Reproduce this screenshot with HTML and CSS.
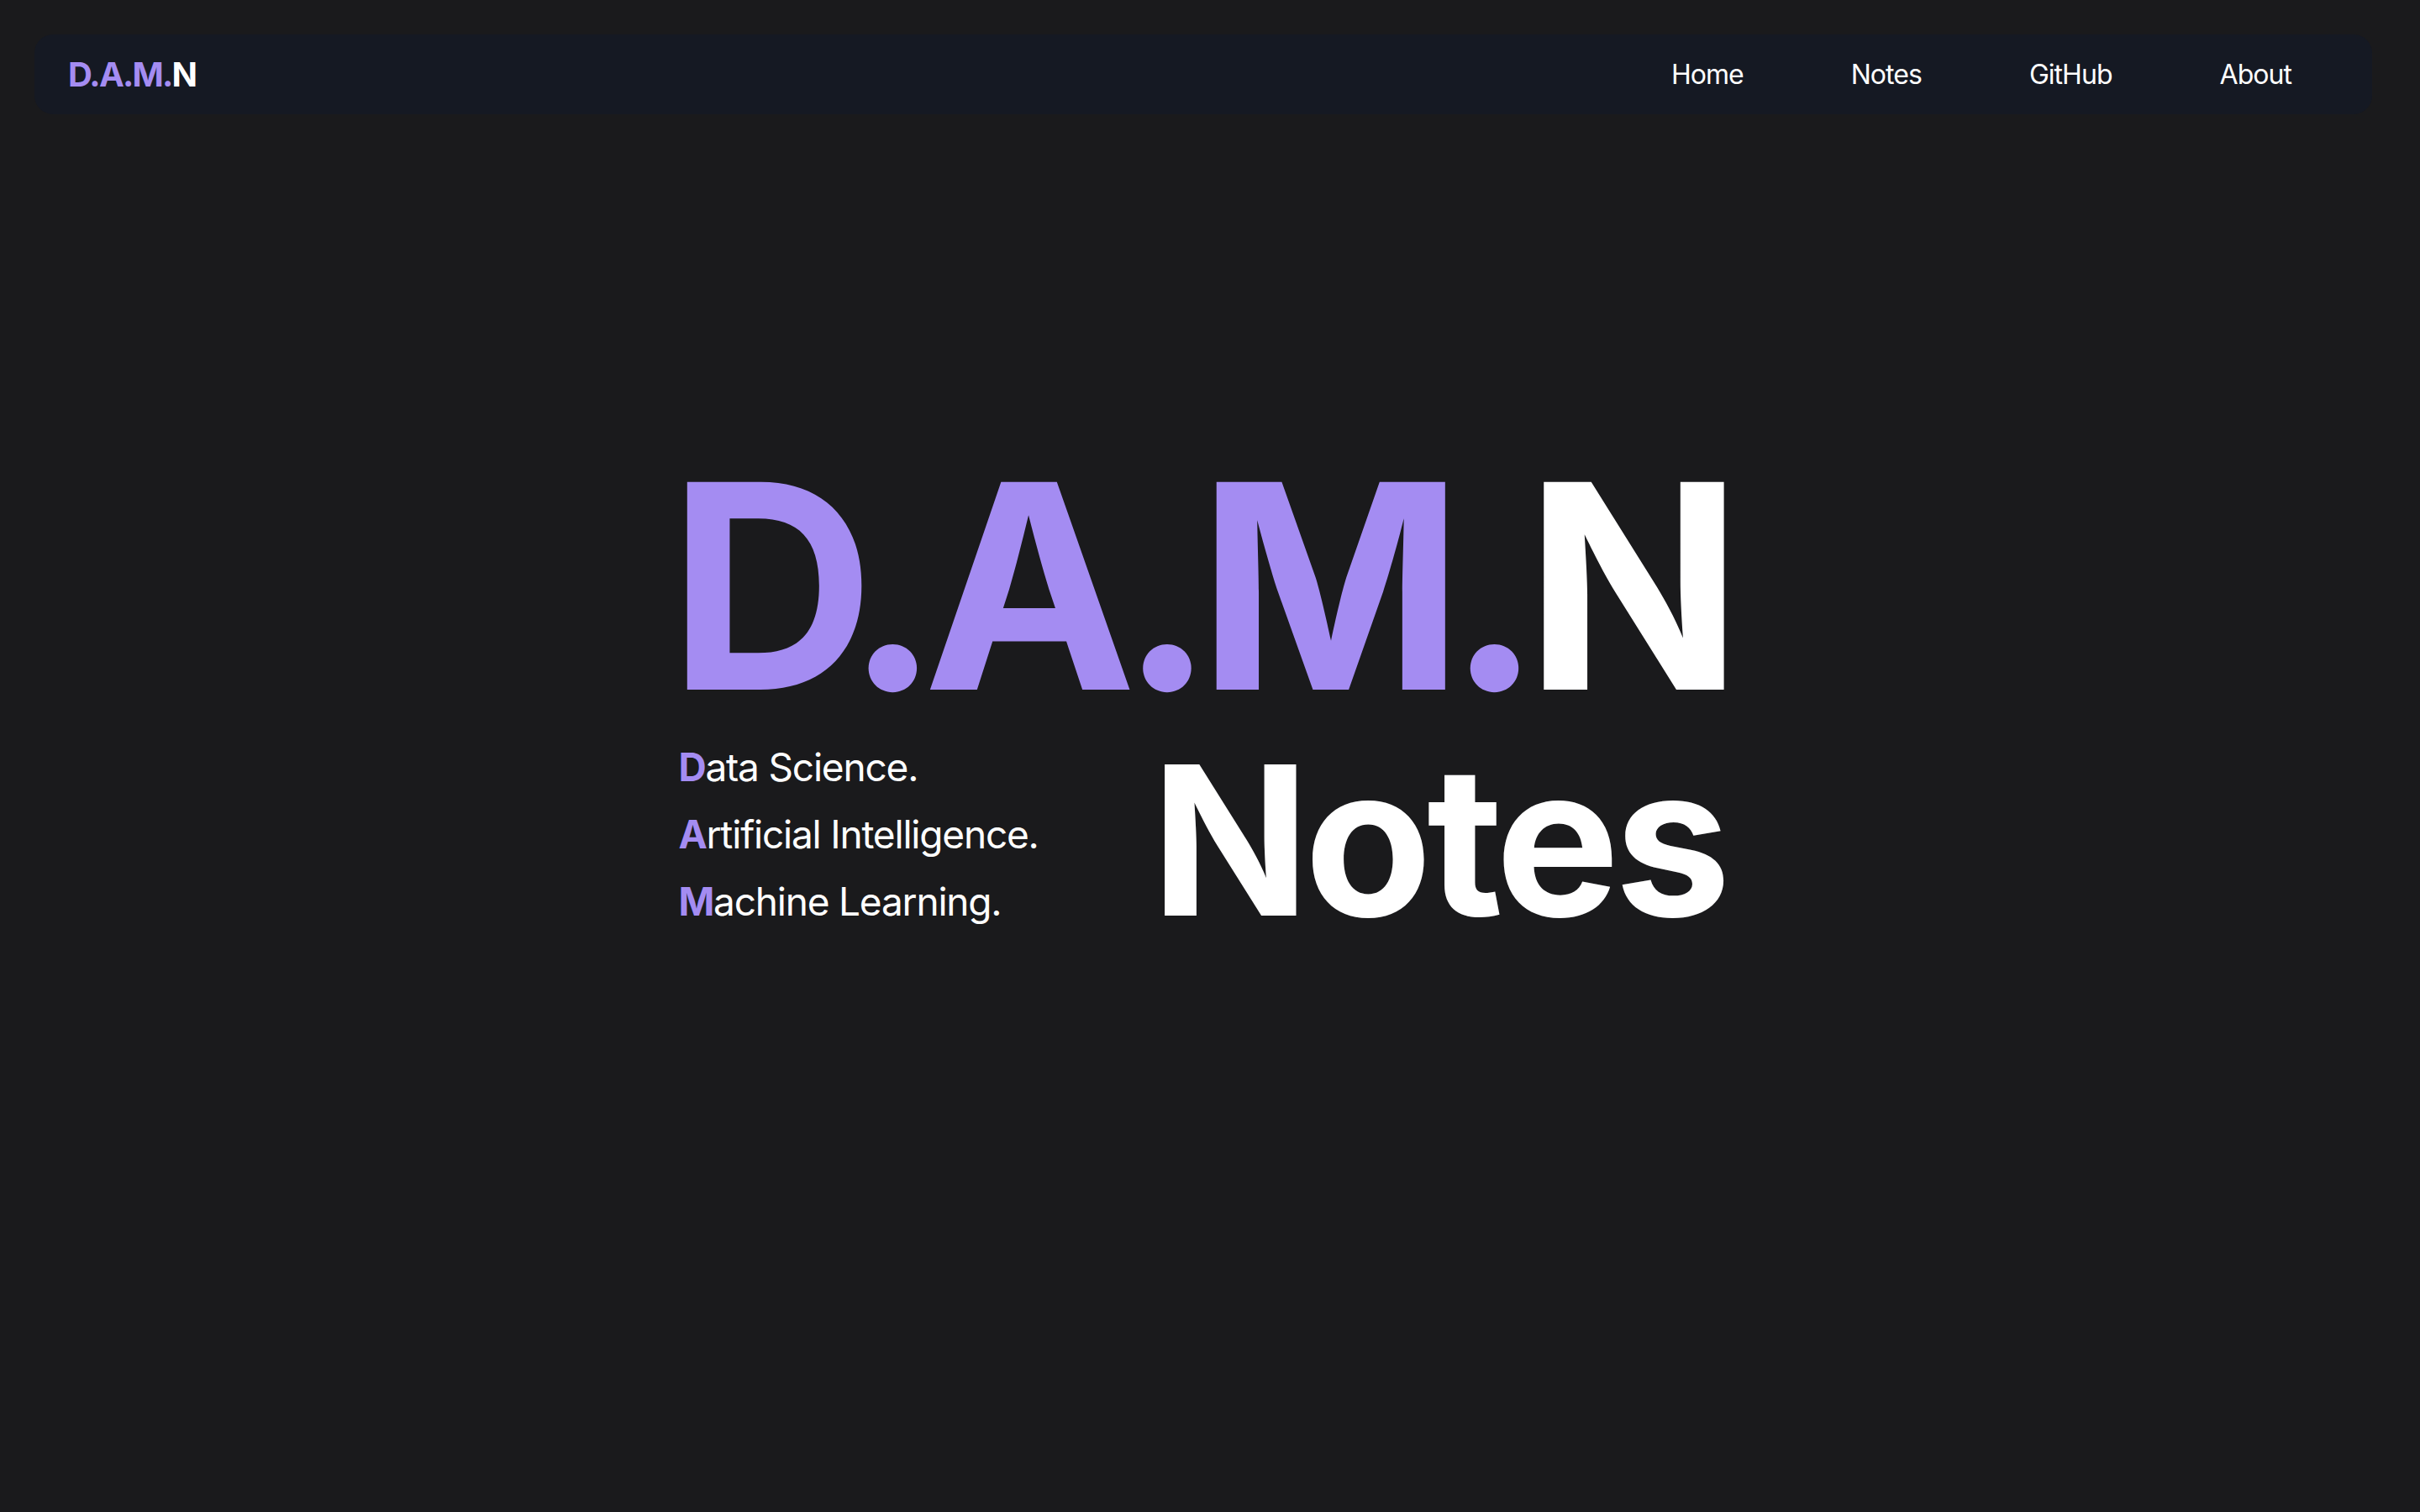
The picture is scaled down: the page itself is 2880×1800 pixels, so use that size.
FILE: index.html
```html
<!DOCTYPE html>
<html lang="en">
<head>
<meta charset="utf-8">
<title>D.A.M.N Notes</title>
<link rel="stylesheet" href="styles.css">
</head>
<body>
<header class="header">
  <nav class="navbar">
    <a class="brand" href="#"><span class="accent">D.A.M.</span>N</a>
    <ul class="nav-links">
      <li><a href="#">Home</a></li>
      <li><a href="#">Notes</a></li>
      <li><a href="#">GitHub</a></li>
      <li><a href="#">About</a></li>
    </ul>
  </nav>
</header>
<main class="hero">
  <div class="hero-inner">
    <h1 class="title"><span class="accent">D.A.M.</span>N</h1>
    <div class="hero-row">
      <ul class="subjects">
        <li><span class="letter">D</span>ata Science.</li>
        <li><span class="letter">A</span>rtificial Intelligence.</li>
        <li><span class="letter">M</span>achine Learning.</li>
      </ul>
      <div class="notes">Notes</div>
    </div>
  </div>
</main>
</body>
</html>
```
FILE: styles.css
```css
html, body {
  margin: 0;
  padding: 0;
  background: #1a1a1c;
  height: 100%;
}
body {
  font-family: Inter, "Liberation Sans", sans-serif;
  color: #ffffff;
}
.header {
  padding: 41px 57px 0 41px;
}
.accent { color: #a48cf2; }
.navbar {
  height: 95px;
  background: #151923;
  border-radius: 22px;
  display: flex;
  align-items: center;
  justify-content: space-between;
  padding: 0 32px 0 40px;
}
.brand {
  font-size: 40px;
  font-weight: 700;
  color: #ffffff;
  text-decoration: none;
  letter-spacing: -0.045em;
}
.nav-links {
  list-style: none;
  margin: 0;
  padding: 0;
  display: flex;
}
.nav-links a {
  display: block;
  padding: 0 64px;
  font-size: 32px;
  color: #ffffff;
  text-decoration: none;
  letter-spacing: -0.03em;
}
.hero {
  display: flex;
  justify-content: center;
  padding: 392px 19px 0 0;
}
.hero-inner {
  display: flex;
  flex-direction: column;
}
.title {
  margin: 0 0 0 -12px;
  font-size: 340px;
  font-weight: 700;
  line-height: 1;
  letter-spacing: -0.06em;
}
.hero-row {
  display: flex;
  justify-content: space-between;
  align-items: last baseline;
  margin-top: 5px;
}
.subjects {
  list-style: none;
  margin: 0;
  padding: 0;
  font-size: 46px;
  line-height: 80px;
  letter-spacing: -0.026em;
}
.letter {
  color: #a48cf2;
  font-weight: 700;
}
.notes {
  font-size: 248px;
  font-weight: 700;
  line-height: 1;
  letter-spacing: -0.026em;
}
```
